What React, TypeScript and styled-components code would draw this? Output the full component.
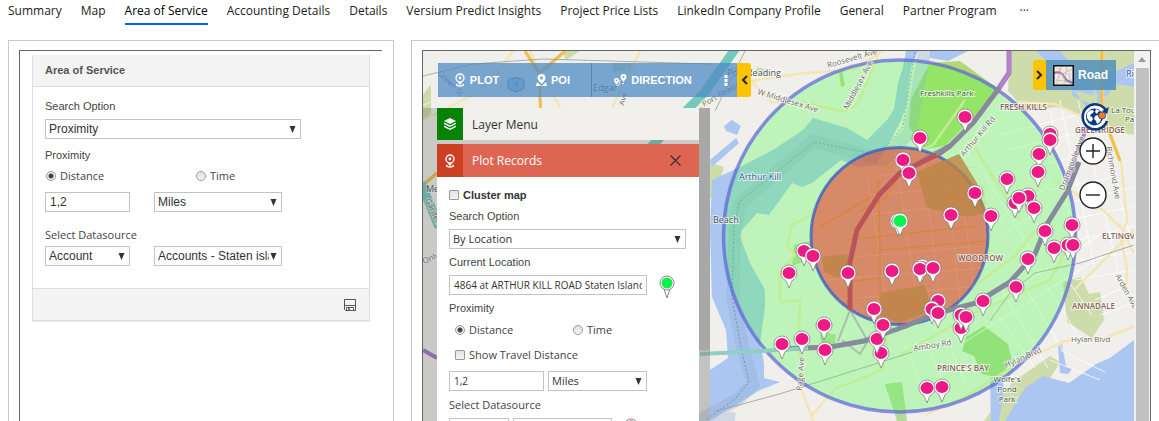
import React from "react";
import styled, { createGlobalStyle, css } from "styled-components";

const GlobalStyle = createGlobalStyle`
  * { box-sizing: border-box; }
  body {
    margin: 0;
    background: #fff;
    color: #333;
    font-family: "Liberation Sans", Arial, sans-serif;
    overflow: hidden;
  }
  button, input, select { font: inherit; color: inherit; margin: 0; }
`;

const ui = `"Open Sans", "Noto Sans", sans-serif`;

const Page = styled.div`
  display: flex;
  flex-direction: column;
  height: 100vh;
`;

const Tabs = styled.nav`
  display: flex;
  flex: none;
  gap: 19px;
  height: 40px;
  padding-left: 8px;
  font-family: ${ui};
  font-size: 12px;
  line-height: 22px;
  white-space: nowrap;
`;

const Tab = styled.a<{ $active?: boolean }>`
  height: 25px;
  color: #222;
  text-decoration: none;
  ${(p) => p.$active && css`color: #000; border-bottom: 2px solid #0b62f0;`}
`;

const MoreTabs = styled.button`
  height: 22px;
  padding: 0 4px;
  border: 0;
  background: none;
`;

const Columns = styled.main`
  display: grid;
  flex: 1;
  min-height: 0;
  grid-template-columns: minmax(0, 386fr) minmax(0, 748fr);
  gap: 17px;
  padding-left: 8px;
`;

const Panel = styled.section<{ $open?: boolean }>`
  min-height: 0;
  display: flex;
  padding: 9px ${(p) => (p.$open ? 8 : 11)}px 0 10px;
  border: 1px solid #c8c8c8;
  border-bottom: 0;
  ${(p) => p.$open && css`border-right: 0;`}
`;

const Frame = styled.div<{ $right?: boolean }>`
  flex: 1;
  min-width: 0;
  display: flex;
  overflow: hidden;
  border: solid #666;
  border-width: 1px ${(p) => (p.$right ? 1 : 0)}px 0 1px;
`;

const Card = styled.form`
  flex: 1;
  align-self: flex-start;
  margin: 4px 12px 0 12px;
  border: 1px solid #ddd;
  border-top: 0;
  box-shadow: 0 1px 1px #eee;
`;

const CardHead = styled.h2`
  margin: 0;
  padding-left: 12px;
  height: 32px;
  border-bottom: 1px solid #ddd;
  background: #f4f4f4;
  color: #555;
  font-size: 11px;
  line-height: 31px;
`;

const CardBody = styled.div`
  padding: 6px 68px 22px 12px;
`;

const CardFoot = styled.footer`
  display: flex;
  justify-content: flex-end;
  align-items: center;
  height: 32px;
  padding-right: 13px;
  border-top: 1px solid #ddd;
  background: #f4f4f4;
`;

const PlainButton = styled.button`
  display: flex;
  padding: 0;
  border: 0;
  background: none;
  cursor: pointer;
`;

const Label = styled.label<{ $top?: number; $bottom?: number; $ui?: boolean }>`
  display: block;
  width: max-content;
  margin: ${(p) => p.$top ?? 5}px 0 ${(p) => p.$bottom ?? 5}px;
  font-size: 11px;
  line-height: 16px;
  color: #444;
  ${(p) => p.$ui && css`font-family: ${ui};`}
`;

const Row = styled.div<{ $gap?: number }>`
  display: flex;
  align-items: center;
  gap: ${(p) => p.$gap ?? 0}px;
`;

const ChoiceRow = styled.div<{ $first: number; $indent?: number; $top?: number; $bottom?: number }>`
  display: grid;
  grid-template-columns: ${(p) => p.$first}px 1fr;
  padding-left: ${(p) => p.$indent ?? 0}px;
  margin: ${(p) => p.$top ?? 0}px 0 ${(p) => p.$bottom ?? 0}px;
`;

const Choice = styled.label<{ $bold?: boolean }>`
  display: flex;
  align-items: center;
  gap: 4px;
  font-family: ${ui};
  font-size: 11px;
  line-height: 16px;
  color: #444;
  ${(p) => p.$bold && css`
    font-family: "Liberation Sans", Arial, sans-serif;
    font-weight: bold;
    font-size: 11px;
    color: #333;
  `}
`;

const Tick = styled.input`
  appearance: none;
  flex: none;
  width: 10px;
  height: 10px;
  border: 1px solid #999;
  border-radius: 1px;
  background: linear-gradient(#e2e2e2, #f4f4f4);
  &[type="radio"] { border-radius: 50%; }
  &[type="radio"]:checked { background: radial-gradient(circle, #444 0 2px, #eee 3px); }
`;

const box = css`
  height: 20px;
  border: 1px solid #c3c3c3;
  border-radius: 0;
  background: #fff;
  font-size: 12px;
  line-height: 18px;
  color: #333;
`;

const TextBox = styled.input<{ $w: number; $small?: boolean }>`
  ${box}
  width: ${(p) => p.$w}px;
  padding: 0 4px;
  ${(p) => p.$small && css`font-family: ${ui}; font-size: 10px;`}
`;

const SelectWrap = styled.span<{ $w?: number }>`
  display: grid;
  align-items: center;
  width: ${(p) => (p.$w ? `${p.$w}px` : "auto")};
  > * { grid-area: 1 / 1; }
  > svg { justify-self: end; margin-right: 5px; pointer-events: none; }
`;

const SelectBox = styled.select<{ $small?: boolean }>`
  ${box}
  appearance: none;
  width: 100%;
  padding: 0 12px 0 3px;
  ${(p) => p.$small && css`font-family: ${ui}; font-size: 11px;`}
`;

function Select({ id, value, w, small, label }: { id: string; value: string; w?: number; small?: boolean; label?: string }) {
  return (
    <SelectWrap $w={w}>
      <SelectBox id={id} aria-label={label} $small={small} defaultValue={value}>
        <option>{value}</option>
      </SelectBox>
      <svg width="7" height="7" viewBox="0 0 7 7"><path d="M.5 0h6L3.500 7z" fill="#333" /></svg>
    </SelectWrap>
  );
}

const PinSlot = styled.span<{ $left?: number }>`
  display: flex;
  height: 20px;
  margin-left: ${(p) => p.$left ?? 0}px;
`;

const MapArea = styled.div`
  position: relative;
  flex: 1;
  min-width: 0;
  overflow: hidden;
  background: #f0efeb;
`;

const MapCanvas = styled.svg`
  position: absolute;
  inset: 0;
  width: 100%;
  height: 100%;
`;

const Toolbar = styled.div`
  position: absolute;
  left: 15px;
  top: 12px;
  display: flex;
  height: 34px;
`;

const ToolButton = styled.button<{ $w: number; $line?: boolean }>`
  display: flex;
  align-items: center;
  justify-content: center;
  gap: 4px;
  width: ${(p) => p.$w}px;
  padding: 0;
  border: 0;
  ${(p) => p.$line && css`border-right: 1px solid #4e89bd;`}
  background: rgba(77, 139, 196, 0.74);
  color: #fff;
  font-size: 11px;
  font-weight: bold;
`;

const Toggle = styled.button<{ $side: "left" | "right" }>`
  display: flex;
  align-items: center;
  justify-content: center;
  width: ${(p) => (p.$side === "left" ? 13 : 14)}px;
  padding: 0;
  border: 0;
  border-radius: ${(p) => (p.$side === "left" ? "3px 0 0 3px" : "0 3px 3px 0")};
  background: #ffc400;
`;

const MapType = styled.div`
  position: absolute;
  right: 18px;
  top: 9px;
  display: flex;
  height: 30px;
`;

const RoadButton = styled.button`
  display: flex;
  align-items: center;
  gap: 4px;
  width: 70px;
  padding: 0 0 0 7px;
  border: 0;
  background: rgba(82, 143, 188, 0.85);
  color: #fff;
  font-size: 12px;
  font-weight: bold;
`;

const MapControls = styled.div`
  position: absolute;
  right: 25px;
  top: 51px;
  display: flex;
  flex-direction: column;
`;

const ZoomButton = styled(PlainButton)<{ $top: number }>`
  margin-top: ${(p) => p.$top}px;
`;

const SideShade = styled.div`
  position: absolute;
  left: 0;
  top: 57px;
  bottom: 0;
  display: flex;
  padding-left: 14px;
  background: rgba(80, 80, 80, 0.24);
`;

const SidePanel = styled.div`
  width: 262px;
`;

const SideTrack = styled.div`
  width: 11px;
  background: linear-gradient(#a8a8a8 0 242px, rgba(168, 168, 168, 0.2) 243px);
`;

const SideHead = styled.div<{ $bg: string; $tile: string; $h: number; $color: string }>`
  display: flex;
  align-items: center;
  height: ${(p) => p.$h}px;
  background: ${(p) => p.$bg};
  color: ${(p) => p.$color};
  font-family: ${ui};
  font-size: 12px;
  > span:first-child {
    display: flex;
    align-items: center;
    justify-content: center;
    width: 26px;
    height: 100%;
    margin-right: 9px;
    background: ${(p) => p.$tile};
  }
  > button { margin: 0 18px 0 auto; }
`;

const SideForm = styled.form`
  height: 100%;
  padding: 10px 13px 0 12px;
  background: #fff;
`;

const Gap = styled.div`
  height: 4px;
`;

const ScrollTrack = styled.div`
  display: flex;
  flex: none;
  flex-direction: column;
  align-items: center;
  width: 16px;
  padding-top: 6px;
  background: #f1f1f1;
`;

const ScrollThumb = styled.div`
  flex: 1;
  width: 13px;
  margin-top: 6px;
  background: #c1c1c1;
`;

const PlotIcon = () => (
  <svg width="12" height="14" viewBox="0 0 12 14" fill="none" stroke="#fff" strokeWidth="1.3">
    <circle cx="6" cy="5" r="4" />
    <circle cx="6" cy="5" r="1.4" fill="#fff" stroke="none" />
    <path d="M4.500 9L6 11l1.500-2M3.500 11c-2 1-1 2 2.500 2s4.500-1 2.500-2" />
  </svg>
);

const pinShape = "M-8 0a8 8 0 1 1 16 0c0 4-2.500 6.500-5 7.600L0 15-3 7.600C-5.500 6.500-8 4-8 0z";

const Pin = ({ x, y, color = "#ed1a85" }: { x: number; y: number; color?: string }) => (
  <g transform={`translate(${x} ${y})`}>
    <path d={pinShape} fill="#fff" stroke="#777" strokeWidth=".7" />
    <ellipse rx="6.500" ry="6" fill={color} />
  </g>
);

const FormPin = ({ color }: { color: string }) => (
  <svg width="16" height="24" viewBox="-8 -8 16 24">
    <path d="M-3 6L0 15l3-9" fill="#fff" stroke="#888" />
    <circle r="7" fill="#fff" stroke="#888" />
    <circle r="5.500" fill={color} />
  </svg>
);

const pins: [number, number][] = [
  [965, 117], [920, 138], [903, 160], [909, 173], [975, 193], [1007, 179], [1050, 134], [1050, 140],
  [1039, 154], [1038, 172], [1028, 196], [1015, 203], [1019, 198], [1034, 208], [951, 215], [991, 216],
  [1072, 225], [1045, 231], [1054, 248], [1068, 245], [1073, 245], [1028, 259], [1016, 287], [983, 301],
  [961, 328], [961, 315], [966, 317], [804, 251], [813, 256], [789, 273], [848, 273], [892, 271],
  [922, 267], [920, 269], [933, 268], [938, 301], [932, 309], [938, 313], [874, 309], [881, 353],
  [877, 339], [883, 325], [824, 325], [802, 339], [825, 350], [782, 344], [927, 388], [942, 387],
];

const streets = "M423 70l50-19M423 88l100-37M423 105l60-22 70-32M440 51l40 60M475 51l30 60M600 51l-8 57M630 51l-12 57M560 51l20 57M500 104l60-53M540 70l170 5M545 90l130 4M770 51l-10 40M790 51l-5 46M810 51l-4 42M830 51l-6 30M755 68l100-10M755 80l78-8M850 60l15-9";
const grid = "M822 260l160-14M826 280l158-12M838 300l138-14M880 175l95-8M870 195l112-10M862 215l124-12M868 180l20 130M895 152l25 170M922 152l20 166M945 162l15 140M960 172l14 120";
const eastGrid = "M960 345l150-94M950 330l150-95M1000 135l95-25M1008 150l90-22M1020 170l75-18M1050 190l60-12M1060 205l74-18M1070 220l64-14M1078 240l56-14M1080 260l54-8M1075 280l59-10M1060 100l35 170M1078 100l40 170M1098 120l36 130M1050 110l20 110M980 290l55 78M998 284l50 84M1018 276l46 76M1036 268l40 64M1050 255l42 60M925 340l26 60M905 345l24 60M945 333l20 50M1000 235l50-30M990 225l60-40M1005 170l45 80M985 175l60 100M1080 140l30-8M1095 300l35-15M1100 315l34-12M1050 360l50 20M1060 350l45 22";

const road = { fontSize: 8, fill: "#6f6b65" };

const ServiceMap = () => (
  <MapCanvas viewBox="423 51 711 370" preserveAspectRatio="xMinYMin slice" fontFamily={ui}>
    <rect x="423" y="51" width="1200" height="800" fill="#f0efeb" />
    <g fill="#cddcaa">
      <path d="M562 51h18l-14 9zM614 63h22l-4 8h-20zM423 95l8-12v30l-8 8zM757 66l14 6-6 5-10-3zM710 163l14 4-6 20-8 12zM1010 51h124v84l-30-6-28-16-20-6-30 4-18-20zM1063 282l18-5 8 17 11-2 4 28-12 18-25-16zM1030 370l20-14 10 6-12 20-16 4-18 35h-30l28-38z" />
      <path d="M839 72l3-1 3 15-4 1z" fill="#b9d58c" />
    </g>
    <path d="M930 63l30-2 37 27-20 26-32 32-20 3-16-22 2-28z" fill="#b3d874" />
    <path d="M966 337l18-11 24 18 4 16-12 18-18-4-8-18-12-5z" fill="#aed68b" />
    <path d="M794 245l16-4 4 17-22 8zM820 331l16 4-1 10h-14zM885 384l17-2 5 39h-10z" fill="#b4d99b" />

    <g fill="#abc6f0">
      <path d="M906 51l-3 16-5 16-4 26-7 11-20 20-20-12-34-10-10 12-30 20-33 17-13 6-15 7-2 50 2 67 14 33 2 28-18 12v51l50-31 20-8-16-4 0-15-4-20 5-36v-17l-15-27-10-26 2-7 15-17 12 2 23-32 10 4 10-4 29-23 16 7 19-2 15-25 10-20 5-13 5-40 7-16z" />
      <path d="M930 51h38l-20 10-18-3zM710 160l26-22 3 5-27 24zM724 126l8-6 9 6-4 9-11-4zM1036 51h24l20 24 18 20-2 14-10-2-16-23zM1134 63l-22 10-20 22-20-5v6l24 10 22-22 16 3z" />
      <path d="M1058 346l4-2 4 22 6 3-4 5-8-1zM990 378l12-4 2 17-5 30h-8z" />
      <path d="M1134 340l-24 18-14 6-27 19-26-7-18 12-20 33h400v-81z" />
    </g>
    <path d="M733 421l-28-3 30-16 16-16-11-40-9-45 2-70 5-25 73-63 70 19 27-28 15-83" transform="translate(2 -2)" fill="none" stroke="#92aed7" strokeWidth="13" opacity=".35" />
    <path d="M707 419l28-20 14-17-9-40-8-45 2-70 5-25 75-60 65 13 24-28 12-76" fill="none" stroke="#6d8499" strokeWidth=".8" strokeDasharray="2 2" />

    <g fill="none" stroke="#fff" strokeWidth="1" opacity=".8"><path d={streets} /><path d={eastGrid} /></g>
    <path d={streets} fill="none" stroke="#dcdad4" strokeWidth=".4" />
    <g fill="none" stroke="#f4e6b2" strokeWidth="2.400">
      <path d="M423 120l60-30 30-39M640 51l-28 57M530 51l10 22 28 48M700 108l52-27 44-7 60-5 25-18M752 82l20 20 33 1 40 9 13-8 22-53" />
      <path d="M1103 51v60l18 50 6 60-6 18 6 30-1 20M1015 102l40 2 30 14M1053 180l50 30 20 20 18 38M1134 230l-30 30-30 30M780 302l20-2-1 45 3 47 12 30M812 415l24-27 20-7 27-12 4-35-10-14M925 415l38-17 52-33 50-24 40-3 30-12M965 100l-32 45-30 12-15 11-18 30-52 30M780 300v-28l15-17-8-10 5-20 30-15M1035 230l-20 26-38 28M970 140l50 80M1080 225l-30 55-70 30-80 45M990 255l-7-70" />
    </g>
    <g fill="none" stroke="#f2be45" strokeWidth="3"><path d="M525 51l14 22 2 48M541 72l24-21M1102 51v62l18 48M423 185l14-12" /></g>
    <path d="M716 411l60-16 42-13 60-19 50-16M990 321l20-28 25-20 45-10 54-18M423 76l50-12 70-5 167 5M745 51l-30 60" fill="none" stroke="#9b9995" strokeWidth=".8" />

    <circle cx="899.5" cy="236" r="176" fill="rgb(82 255 77 / 31%)" stroke="#5b62dc" strokeOpacity=".7" strokeWidth="3.500" />
    <circle cx="899.5" cy="236" r="88.500" fill="rgb(232 67 48 / 60%)" stroke="#355acb" strokeOpacity=".75" strokeWidth="3" />
    <path d={grid} fill="none" stroke="#eab08a" strokeWidth=".5" opacity=".6" />
    <path d="M822 257l26-3v20l-10 4-14-6zM880 293l45-8 7 26-33 12-19-7zM917 172l42-18 18 29 9 30-18 4-41-9z" fill="#bc8445" opacity=".8" />
    <path d="M878 180l2 60v60M848 240l130-14M848 282l34-4M880 250l60-5 46-4M860 211l24-12 20-30M820 227l50-30" fill="none" stroke="#d98445" strokeWidth="1.500" />
    <path d="M1009 51v22l-12 18-24 32-25 23-20 9-28 18-22 20-20 35-7 32-1 50-12 31M850 310l16 28M842 340l18 14 12-20" fill="none" stroke="#917e95" strokeOpacity=".45" strokeWidth="2" />
    <path d="M950 146l-10 7-40 20-21 22-22 35-7 32v48" fill="none" stroke="#b9545b" strokeWidth="5" strokeLinejoin="round" />
    <path d="M1009 51v22l-12 18-24 32-23 23-14 8" fill="none" stroke="#8a879e" strokeWidth="5" strokeLinejoin="round" />
    <path d="M1009 51v22l-9 14" fill="none" stroke="#b77fd0" strokeWidth="4" />
    <path d="M780 349l50-2 34-6 42-15 28-12 42-11 34-21 25-28 12-30 20-32 12-30" fill="none" stroke="#858a9c" strokeWidth="5" strokeLinejoin="round" />
    <path d="M1068 180l10-30 15-38" fill="none" stroke="#ac86c7" strokeWidth="4" />
    <path d="M700 354l63-3 45-3" fill="none" stroke="#8fd0c3" strokeWidth="4" />
    <path d="M738 45l-34 48-24 24-29 30M421 183l18 44" fill="none" stroke="#74c9bc" strokeWidth="9" />
    <path d="M423 350l14 8" stroke="#a078c8" strokeWidth="4" />

    <g stroke="#fff" strokeOpacity=".65" strokeWidth="2" paintOrder="stroke">
      <g {...road}>
        <text transform="translate(437 74) rotate(44)">Green St</text>
        <text transform="translate(828 68) rotate(-16)">Roosevelt Ave</text>
        <text transform="translate(757 94) rotate(17)">W Middlesex Ave</text>
        <text transform="translate(848 110) rotate(-62)">Middlesex Ave</text>
        <text transform="translate(704 107) rotate(-30)">Port Reading</text>
        <text transform="translate(624 106) rotate(-75)">Ave</text>
        <text transform="translate(964 157) rotate(-50)">Arthur Kill Rd</text>
        <text transform="translate(1064 191) rotate(-69)">Drumgoole Ave</text>
        <text transform="translate(1106 147) rotate(80)">Richmond Ave</text>
        <text transform="translate(1115 276) rotate(61)">Arden Ave</text>
        <text transform="translate(802 391) rotate(-86)">Page Ave</text>
        <text transform="translate(914 351) rotate(-9)">Amboy Rd</text>
        <text transform="translate(1006 368) rotate(-24)">Hylan Blvd</text>
        <text x="1071" y="342">Hylan Blvd</text>
        <text transform="translate(424 264) rotate(-24)">Only</text>
        <text transform="translate(425 200) rotate(65)">Garden</text>
      </g>
      <g fontSize="9" fill="#4b5156">
        <text x="593" y="91">Edgar</text>
        <text x="727" y="76">Port Reading</text>
        <text x="713" y="223">Beach</text>
        <text x="426" y="192">Me</text>
      </g>
      <text x="739" y="180" fontSize="9" fill="#3c5aa6">Arthur Kill</text>
      <text x="1126" y="77" fontSize="9" fill="#3c5aa6">Riv</text>
      <g fontSize="8" fill="#3f6138">
        <text x="920" y="96">Freshkills Park</text>
        <text x="1111" y="113">La Tourette</text>
        <text x="1125" y="122">Park</text>
        <g textAnchor="middle"><text x="1007" y="382">Wolfe's</text><text x="1007" y="392">Pond</text><text x="1007" y="402">Park</text></g>
      </g>
      <g fontSize="8" fontWeight="600" fill="#8c6460">
        <text x="1000" y="110">FRESH KILLS</text>
        <text x="1075" y="133">GREENRIDGE</text>
        <text x="958" y="261">WOODROW</text>
        <text x="1102" y="239">ELTINGVILLE</text>
        <text x="1072" y="309">ANNADALE</text>
        <text x="937" y="371">PRINCE'S BAY</text>
      </g>
    </g>
    <path d="M510 78c2 1 4 1 6-1 2 2 4 2 6 1 3 4 3 8 1 11-2 2-5 1-7 3-2-2-5-1-7-3-2-3-2-7 1-11z" fill="#a9c4e0" stroke="#48729d" />
    <text x="514" y="87" fontSize="8" fill="#345b87">1</text>

    {pins.map(([x, y]) => <Pin key={`${x}-${y}`} x={x} y={y} />)}
    <Pin x={898} y={221} color="#777" />
    <Pin x={900} y={221} color="#0bf24b" />
  </MapCanvas>
);

const tabs = ["Summary", "Map", "Area of Service", "Accounting Details", "Details", "Versium Predict Insights",
  "Project Price Lists", "LinkedIn Company Profile", "General", "Partner Program"];

export default function App() {
  return (
    <Page>
      <GlobalStyle />
      <Tabs>
        {tabs.map((t) => <Tab key={t} href="#" $active={t === "Area of Service"}>{t}</Tab>)}
        <MoreTabs aria-label="More tabs">···</MoreTabs>
      </Tabs>
      <Columns>
        <Panel>
          <Frame>
            <Card>
              <CardHead>Area of Service</CardHead>
              <CardBody>
                <Label htmlFor="area-search">Search Option</Label>
                <Select id="area-search" value="Proximity" />
                <Label as="div" $top={8}>Proximity</Label>
                <ChoiceRow $first={150} $indent={1} $bottom={8}>
                  <Choice><Tick type="radio" name="area-by" defaultChecked />Distance</Choice>
                  <Choice><Tick type="radio" name="area-by" />Time</Choice>
                </ChoiceRow>
                <Row $gap={24}>
                  <TextBox $w={85} aria-label="Proximity value" defaultValue="1,2" />
                  <Select id="area-unit" label="Unit" value="Miles" w={128} />
                </Row>
                <Label $ui htmlFor="area-source" $top={15} $bottom={3}>Select Datasource</Label>
                <Row $gap={24}>
                  <Select id="area-source" value="Account" w={85} />
                  <Select id="area-view" label="View" value="Accounts - Staten island" w={128} />
                </Row>
              </CardBody>
              <CardFoot>
                <PlainButton type="button" aria-label="Save">
                  <svg width="12" height="12" viewBox="0 0 12 12" fill="none" stroke="#555">
                    <path d="M.5.5h11v11H1.500l-1-1zM.5 6.500h11M2.500 11.500v-3h7v3" /><path d="M5 9v2.500" strokeWidth="1.500" />
                  </svg>
                </PlainButton>
              </CardFoot>
            </Card>
          </Frame>
        </Panel>
        <Panel $open>
          <Frame $right>
            <MapArea>
              <ServiceMap />
              <Toolbar>
                <ToolButton $w={77}><PlotIcon />PLOT</ToolButton>
                <ToolButton $w={77} $line>
                  <svg width="11" height="13" viewBox="0 0 11 13" fill="#fff"><path fillRule="evenodd" d="M5.500 0a4 4 0 0 0-4 4c0 2 2 4 4 6 2-2 4-4 4-6a4 4 0 0 0-4-4zm0 2.500a1.500 1.500 0 1 1 0 3 1.500 1.500 0 0 1 0-3zM1 8L0 12h11l-1-4-4.500 4z" /></svg>
                  POI
                </ToolButton>
                <ToolButton $w={122}>
                  <svg width="13" height="12" viewBox="0 0 13 12" fill="none" stroke="#fff">
                    <path fill="#fff" fillRule="evenodd" stroke="none" d="M9.500 0A3 3 0 0 0 6.500 3c0 2 2 3 3 5 1-2 3-3 3-5a3 3 0 0 0-3-3zm0 2a1 1 0 1 1 0 2 1 1 0 0 1 0-2zM2.500 4A2.400 2.400 0 0 0 0 6.500C0 8 1.500 9 2.500 11 3.500 9 5 8 5 6.500A2.400 2.400 0 0 0 2.500 4zm0 1.600a.9.9 0 1 1 0 1.800.9.9 0 0 1 0-1.800z" />
                    <path d="M3 11.500c3 0 2-2 2.500-4S6.500 6 7 6M8 9.500h2" />
                  </svg>
                  DIRECTION
                </ToolButton>
                <ToolButton $w={23} aria-label="More tools">
                  <svg width="4" height="13" viewBox="0 0 4 13" fill="#fff"><path d="M.5 1h3v3h-3zM.5 5h3v3h-3zM.5 9h3v3h-3z" /></svg>
                </ToolButton>
                <Toggle $side="right" aria-label="Collapse toolbar">
                  <svg width="7" height="10" viewBox="0 0 7 10" fill="none" stroke="#222" strokeWidth="2"><path d="M6 1L2 5l4 4" /></svg>
                </Toggle>
              </Toolbar>
              <SideShade>
                <SidePanel>
                  <SideHead $bg="#f1f0ed" $tile="#078307" $h={32} $color="#333">
                    <span>
                      <svg width="14" height="14" viewBox="0 0 14 14"><path d="M7 1l6 3-6 3-6-3zM1 5.500l6 3 6-3v1.500l-6 3-6-3zM1 8.500l6 3 6-3V10l-6 3-6-3z" fill="#fff" /></svg>
                    </span>
                    Layer Menu
                  </SideHead>
                  <Gap />
                  <SideHead $bg="#df6553" $tile="#cc4022" $h={33} $color="#fff">
                    <span><PlotIcon /></span>
                    Plot Records
                    <PlainButton aria-label="Close">
                      <svg width="11" height="11" viewBox="0 0 11 11" stroke="#333" strokeWidth="1.200"><path d="M.5.5l10 10M10.500.5l-10 10" /></svg>
                    </PlainButton>
                  </SideHead>
                  <SideForm>
                    <Choice $bold><Tick type="checkbox" />Cluster map</Choice>
                    <Label htmlFor="plot-search">Search Option</Label>
                    <Select id="plot-search" small value="By Location" />
                    <Label htmlFor="plot-location">Current Location</Label>
                    <Row $gap={12}>
                      <TextBox id="plot-location" $small $w={198} defaultValue="4864 at ARTHUR KILL ROAD Staten Island" />
                      <PinSlot><FormPin color="#0bf24b" /></PinSlot>
                    </Row>
                    <Label as="div">Proximity</Label>
                    <ChoiceRow $first={118} $indent={6} $top={6} $bottom={9}>
                      <Choice><Tick type="radio" name="plot-by" defaultChecked />Distance</Choice>
                      <Choice><Tick type="radio" name="plot-by" />Time</Choice>
                    </ChoiceRow>
                    <ChoiceRow $first={150} $indent={6} $bottom={8}>
                      <Choice><Tick type="checkbox" />Show Travel Distance</Choice>
                    </ChoiceRow>
                    <Row $gap={4}>
                      <TextBox $small $w={95} aria-label="Distance value" defaultValue="1,2" />
                      <Select id="plot-unit" label="Unit" small value="Miles" w={99} />
                    </Row>
                    <Label $ui htmlFor="plot-source" $top={6}>Select Datasource</Label>
                    <Row $gap={4}>
                      <Select id="plot-source" small value="Account" w={60} />
                      <Select id="plot-view" label="View" small value="Accounts" w={99} />
                      <PinSlot $left={7}><FormPin color="#ed1a85" /></PinSlot>
                    </Row>
                  </SideForm>
                </SidePanel>
                <SideTrack />
              </SideShade>
              <MapType>
                <Toggle $side="left" aria-label="Collapse map types">
                  <svg width="7" height="10" viewBox="0 0 7 10" fill="none" stroke="#222" strokeWidth="2"><path d="M1 1l4 4-4 4" /></svg>
                </Toggle>
                <RoadButton>
                  <svg width="21" height="21" viewBox="0 0 21 21" fill="none">
                    <path d="M0 0h21v21H0z" fill="#eee9e2" />
                    <path d="M2 7l8 2 9-5M8 2l-4 17M14 2l-3 17M3 15l16 2M16 8l2 11" stroke="#cbbfb3" />
                    <path d="M1 8c6-2 8 0 10 4s4 4 9 6" stroke="#9870bd" strokeWidth="2" />
                    <path d="M5 3l9 15" stroke="#e8b48d" />
                    <path d="M.75.75h19.500v19.500H.75z" stroke="#111" strokeWidth="1.500" />
                  </svg>
                  Road
                </RoadButton>
              </MapType>
              <MapControls>
                <PlainButton aria-label="Locate">
                  <svg width="30" height="30" viewBox="-1 0 30 30">
                    <circle cx="15" cy="15" r="12" fill="#fff" />
                    <circle cx="14.5" cy="15" r="8.500" fill="#0b3a85" />
                    <path d="M7 12c1-3 3-4 5-4l2 1-1 2-2 1-1 2 2 1 1 2-2 3-2-1-2-3zM16 7l4 2-2 1-1 2-2-2zM15 14l3-1 3 4-1 3-3 2-1-3-2-2z" fill="#fff" />
                    <path d="M26 8.500A12.500 12.500 0 1 0 27 19" fill="none" stroke="#0b3a85" strokeWidth="2.600" />
                    <path d="M22 9l7-4-2 7z" fill="#0b3a85" />
                    <circle cx="22" cy="13.500" r="3.600" fill="#f47a20" stroke="#0b3a85" strokeWidth=".8" />
                  </svg>
                </PlainButton>
                <ZoomButton $top={5} aria-label="Zoom in">
                  <svg width="28" height="28" viewBox="0 0 28 28" fill="#fff" stroke="#222" strokeWidth="1.400"><circle cx="14" cy="14" r="13" /><path d="M7 14h14M14 7v14" /></svg>
                </ZoomButton>
                <ZoomButton $top={16} aria-label="Zoom out">
                  <svg width="28" height="28" viewBox="0 0 28 28" fill="#fff" stroke="#222" strokeWidth="1.400"><circle cx="14" cy="14" r="13" /><path d="M7 14h14" /></svg>
                </ZoomButton>
              </MapControls>
            </MapArea>
            <ScrollTrack>
              <svg width="8" height="5" viewBox="0 0 8 5"><path d="M4 0l4 5H0z" fill="#999" /></svg>
              <ScrollThumb />
            </ScrollTrack>
          </Frame>
        </Panel>
      </Columns>
    </Page>
  );
}
